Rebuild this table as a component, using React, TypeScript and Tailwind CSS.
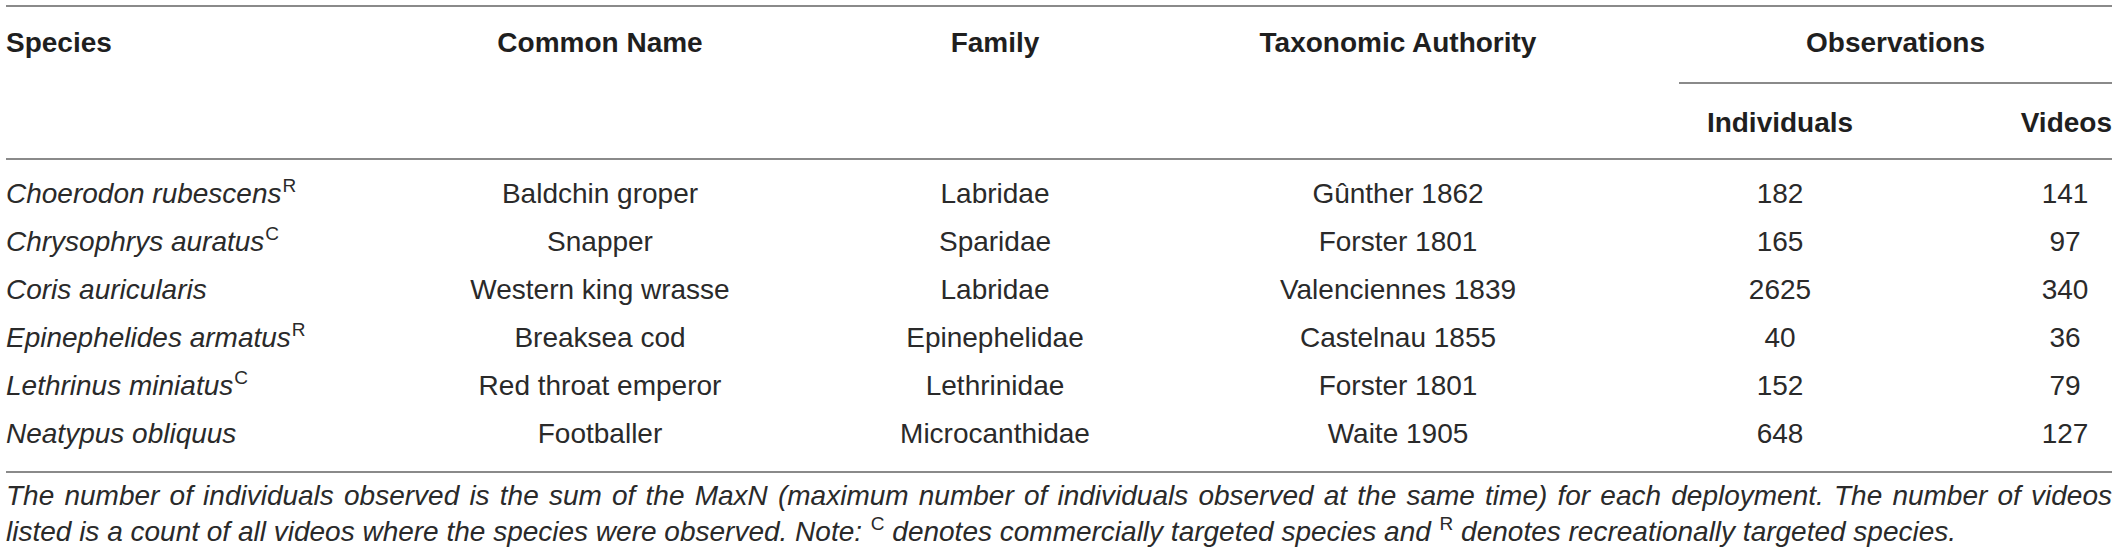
import React from "react";

const rows: [string, string, string, string, string, string, string][] = [
  ["Choerodon rubescens", "R", "Baldchin groper", "Labridae", "Gûnther 1862", "182", "141"],
  ["Chrysophrys auratus", "C", "Snapper", "Sparidae", "Forster 1801", "165", "97"],
  ["Coris auricularis", "", "Western king wrasse", "Labridae", "Valenciennes 1839", "2625", "340"],
  ["Epinephelides armatus", "R", "Breaksea cod", "Epinephelidae", "Castelnau 1855", "40", "36"],
  ["Lethrinus miniatus", "C", "Red throat emperor", "Lethrinidae", "Forster 1801", "152", "79"],
  ["Neatypus obliquus", "", "Footballer", "Microcanthidae", "Waite 1905", "648", "127"],
];

function Sup({ children }: { children: React.ReactNode }) {
  return (
    <span className="relative top-[-11px] not-italic text-[19px] leading-none ml-[1px]">{children}</span>
  );
}

export default function App() {
  return (
    <div className="w-[2118px] h-[552px] overflow-hidden bg-white px-[6px] pt-[5px] text-[#2a2a2a] font-['Liberation_Sans',Arial,sans-serif] text-[28px]">
      <div className="h-[2px] bg-[#8a8a8a]" />
      {/* header */}
      <div className="flex h-[151px] font-bold text-[#1f1f1f]">
        <div className="w-[414px] pt-[20px] leading-[32px]">Species</div>
        <div className="w-[360px] pt-[20px] leading-[32px] text-center">Common Name</div>
        <div className="w-[430px] pt-[20px] leading-[32px] text-center">Family</div>
        <div className="w-[376px] pt-[20px] leading-[32px] text-center">Taxonomic Authority</div>
        <div className="w-[526px] pl-[93px] flex flex-col">
          <div className="pt-[20px] leading-[32px] text-center">Observations</div>
          <div className="mt-[23px] h-[2px] bg-[#8a8a8a]" />
          <div className="mt-[23px] flex leading-[32px]">
            <div className="w-[295px] -ml-[93px]">
              <span className="inline-block w-[388px] text-center">Individuals</span>
            </div>
            <div className="flex-1 text-right">Videos</div>
          </div>
        </div>
      </div>
      <div className="h-[2px] bg-[#8a8a8a]" />
      {/* body */}
      <div className="mt-[10px] flex flex-col">
        {rows.map((r, i) => (
          <div key={i} className="flex h-[48px] leading-[48px] whitespace-nowrap">
            <div className="w-[414px] italic">
              {r[0]}
              {r[1] && <Sup>{r[1]}</Sup>}
            </div>
            <div className="w-[360px] text-center">{r[2]}</div>
            <div className="w-[430px] text-center">{r[3]}</div>
            <div className="w-[376px] text-center">{r[4]}</div>
            <div className="w-[388px] text-center">{r[5]}</div>
            <div className="w-[138px] pl-[44px] text-center">{r[6]}</div>
          </div>
        ))}
      </div>
      <div className="mt-[13px] h-[2px] bg-[#8a8a8a]" />
      <div className="mt-[5px] italic leading-[36px] whitespace-nowrap">
        <div className="text-justify [text-align-last:justify]">
          The number of individuals observed is the sum of the MaxN (maximum number of individuals observed at the same time) for each deployment. The number of videos
        </div>
        <div>
          listed is a count of all videos where the species were observed. Note: <Sup>C</Sup> denotes commercially targeted species and <Sup>R</Sup> denotes recreationally targeted species.
        </div>
      </div>
    </div>
  );
}
